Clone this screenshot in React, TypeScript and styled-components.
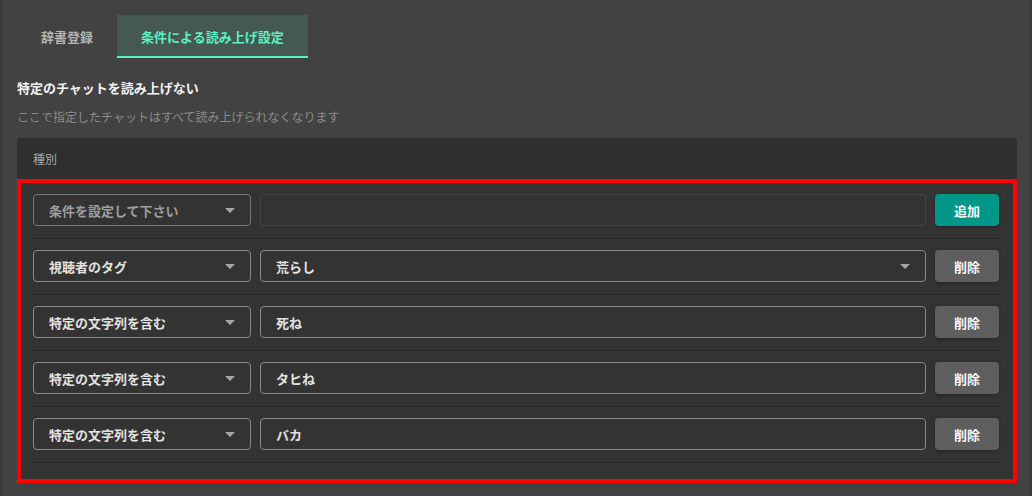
import styled, { createGlobalStyle } from 'styled-components';

const GlobalStyle = createGlobalStyle`
  html, body {
    margin: 0;
    padding: 0;
    background: #424242;
  }
  body {
    font-family: 'Noto Sans CJK JP', 'Noto Sans', sans-serif;
    color: #e0e0e0;
  }
`;

const Page = styled.div`
  width: 1032px;
  height: 496px;
  box-sizing: border-box;
  padding: 15px 15px 0 17px;
  background: #424242;
  box-shadow: inset 2px 0 #3a3a3a, inset -2px 0 #3a3a3a;
  overflow: hidden;
`;

const Tabs = styled.div`
  display: flex;
  height: 43px;
`;

const Tab = styled.div<{ $active?: boolean }>`
  display: flex;
  align-items: center;
  padding: 0 24px;
  box-sizing: border-box;
  font-size: 13px;
  font-weight: 700;
  color: ${({ $active }) => ($active ? '#5cf0c4' : '#b4b4b4')};
  background: ${({ $active }) => ($active ? '#465852' : 'transparent')};
  border-bottom: 2px solid ${({ $active }) => ($active ? '#5cf0c4' : 'transparent')};
  padding-top: 2px;
`;

const Heading = styled.h2`
  margin: 20px 0 0;
  font-size: 13px;
  font-weight: 700;
  color: #f4f4f4;
  line-height: 20px;
`;

const Description = styled.p`
  margin: 9px 0 0;
  font-size: 12px;
  color: #8c8c8c;
  line-height: 20px;
`;

const Card = styled.div`
  margin-top: 11px;
  width: 1000px;
  background: #2f2f2f;
  border-radius: 2px 2px 0 0;
`;

const CardHeader = styled.div`
  height: 41px;
  padding: 0 16px;
  display: flex;
  align-items: center;
  font-size: 12px;
  color: #a8a8a8;
`;

const CardBody = styled.div`
  border: 4px solid #ff0000;
  background: #333333;
  padding: 0 14px 16px 12px;
`;

const Row = styled.div`
  display: flex;
  align-items: center;
  gap: 9px;
  padding: 11px 0 12px;
  border-bottom: 1px solid #262626;
`;

const Select = styled.div<{ $placeholder?: boolean; $grow?: boolean }>`
  position: relative;
  box-sizing: border-box;
  height: 32px;
  ${({ $grow }) => ($grow ? 'flex: 1;' : 'width: 218px;')}
  border: 1px solid ${({ $placeholder }) => ($placeholder ? '#777' : '#8a8a8a')};
  border-radius: 4px;
  display: flex;
  align-items: center;
  padding: 0 15px;
  font-size: 13px;
  font-weight: 700;
  color: ${({ $placeholder }) => ($placeholder ? '#9e9e9e' : '#e2e2e2')};
`;

const Arrow = styled.span`
  position: absolute;
  right: 15px;
  top: 50%;
  margin-top: -2px;
  width: 0;
  height: 0;
  border-left: 5px solid transparent;
  border-right: 5px solid transparent;
  border-top: 5px solid #a6a6a6;
`;

const TextField = styled.div<{ $empty?: boolean }>`
  flex: 1;
  box-sizing: border-box;
  height: 32px;
  border: 1px solid ${({ $empty }) => ($empty ? '#464646' : '#8a8a8a')};
  border-radius: 4px;
  display: flex;
  align-items: center;
  padding: 0 15px;
  font-size: 13px;
  font-weight: 700;
  color: #e2e2e2;
`;

const Button = styled.button<{ $primary?: boolean }>`
  width: 64px;
  height: 32px;
  border: none;
  border-radius: 4px;
  background: ${({ $primary }) => ($primary ? '#009688' : '#5e5e5e')};
  color: #fafafa;
  font-family: inherit;
  font-size: 13px;
  font-weight: 700;
  box-shadow: 0 1px 3px rgba(0, 0, 0, 0.35);
  cursor: pointer;
`;

const rules = [
  { kind: '視聴者のタグ', value: '荒らし', select: true },
  { kind: '特定の文字列を含む', value: '死ね' },
  { kind: '特定の文字列を含む', value: 'タヒね' },
  { kind: '特定の文字列を含む', value: 'バカ' },
];

export default function App() {
  return (
    <>
      <GlobalStyle />
      <Page>
        <Tabs>
          <Tab>辞書登録</Tab>
          <Tab $active>条件による読み上げ設定</Tab>
        </Tabs>
        <Heading>特定のチャットを読み上げない</Heading>
        <Description>ここで指定したチャットはすべて読み上げられなくなります</Description>
        <Card>
          <CardHeader>種別</CardHeader>
          <CardBody>
            <Row>
              <Select $placeholder>
                条件を設定して下さい
                <Arrow />
              </Select>
              <TextField $empty />
              <Button $primary>追加</Button>
            </Row>
            {rules.map((rule, i) => (
              <Row key={i}>
                <Select>
                  {rule.kind}
                  <Arrow />
                </Select>
                {rule.select ? (
                  <Select $grow>
                    {rule.value}
                    <Arrow />
                  </Select>
                ) : (
                  <TextField>{rule.value}</TextField>
                )}
                <Button>削除</Button>
              </Row>
            ))}
          </CardBody>
        </Card>
      </Page>
    </>
  );
}
